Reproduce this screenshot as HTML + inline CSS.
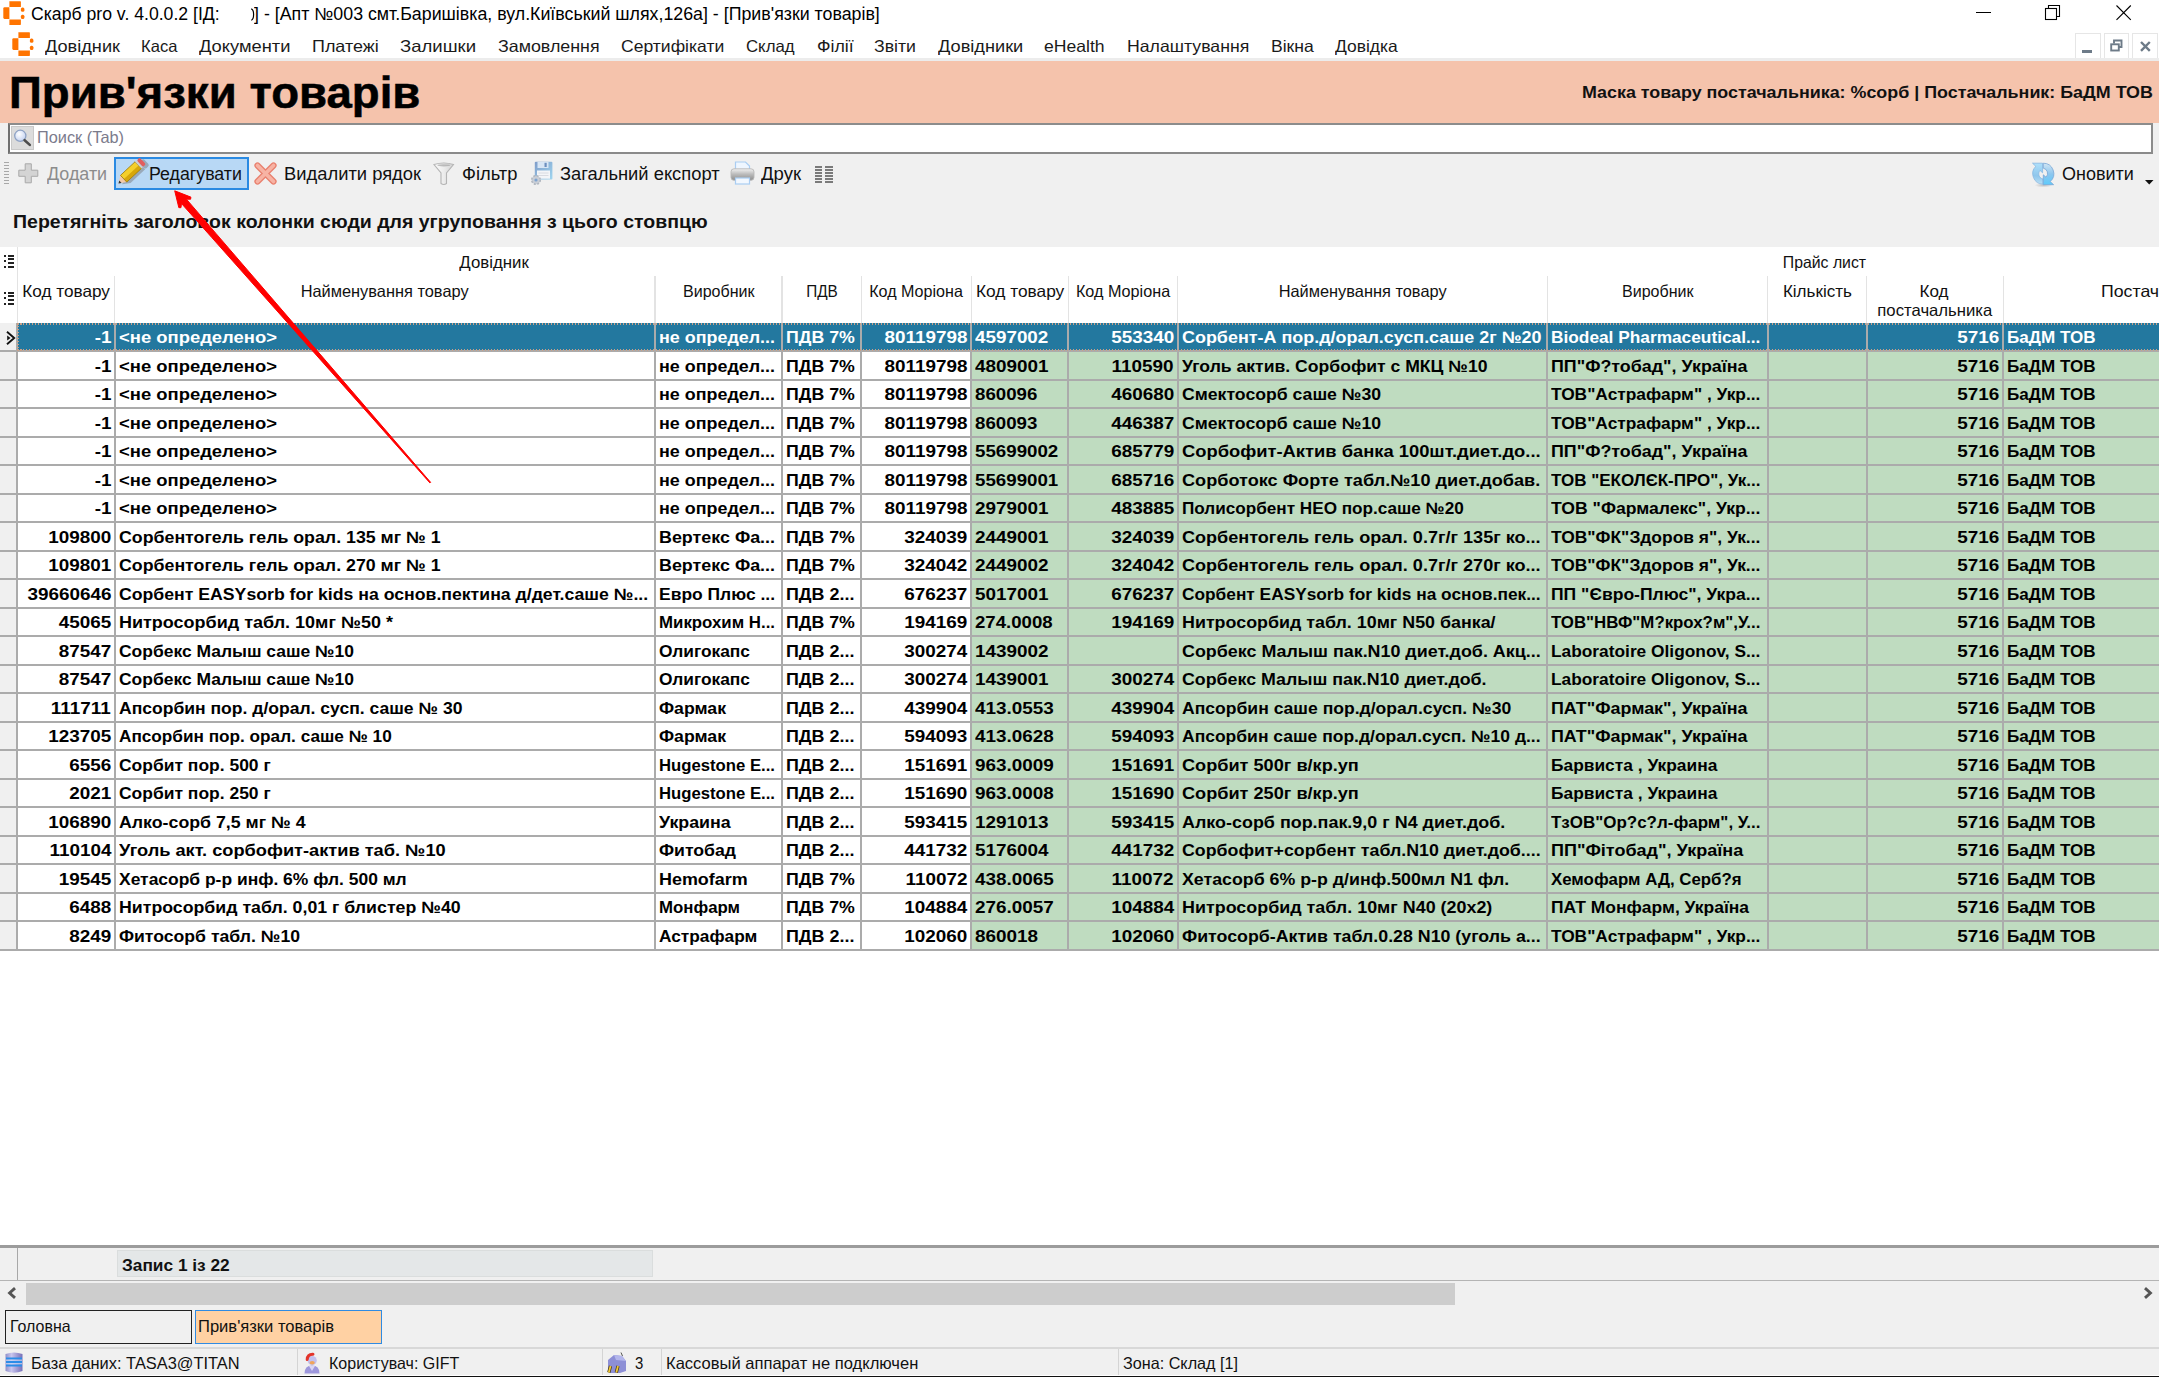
<!DOCTYPE html><html><head><meta charset='utf-8'><title>Прив'язки товарів</title><style>
html,body{margin:0;padding:0}
body{width:2159px;height:1377px;position:relative;overflow:hidden;background:#fff;font-family:'Liberation Sans',sans-serif}
.a{position:absolute}
.t{position:absolute;white-space:pre;line-height:1}
svg{position:absolute;overflow:visible}
</style></head><body>
<svg style="left:3px;top:1px" width="22" height="24" viewBox="0 0 22 24">
<path d="M6.4 0.3 H17.4 Q17.9 0.3 17.9 1 V5.9 H6.4 Z" fill="#FF7400"/>
<path d="M6.4 6.2 V17.9 H1.5 Q0.3 17.9 0.3 16.6 V7.5 Q0.3 6.2 1.5 6.2 Z" fill="#FF7400"/>
<path d="M6.4 18.4 H17.9 V23 Q17.9 23.9 17.4 23.9 H6.4 Z" fill="#FF7400"/>
<rect x="17.9" y="6.4" width="3.5" height="4.3" rx="1.5" fill="#FF7400"/>
<rect x="17.9" y="13.8" width="3.5" height="4.3" rx="1.5" fill="#FF7400"/>
</svg>
<div class="t" style="top:6.29px;font-size:17.5px;color:#000;left:31.00px;transform-origin:0 0;transform:scaleX(1.0081);">Скарб pro v. 4.0.0.2 [ІД:</div>
<svg style="left:250px;top:8px" width="5" height="14" viewBox="0 0 5 14"><path d="M1.2 0.8 Q3.6 1.5 3.6 6.5 Q3.6 11.5 1.2 12.3" fill="none" stroke="#000" stroke-width="1.2"/></svg>
<div class="t" style="top:6.29px;font-size:17.5px;color:#000;left:254.20px;transform-origin:0 0;transform:scaleX(1.0163);">] - [Апт №003 смт.Баришівка, вул.Київський шлях,126а] - [Прив'язки товарів]</div>
<div class="a" style="left:1976px;top:12px;width:15px;height:1.2px;background:#000;"></div>
<svg style="left:2045px;top:5px" width="16" height="16" viewBox="0 0 16 16"><rect x="0.5" y="3.5" width="11" height="11" fill="#fff" stroke="#000" stroke-width="1.1"/><path d="M3.5 3.5 V0.5 H14.5 V11.5 H11.5" fill="none" stroke="#000" stroke-width="1.1"/></svg>
<svg style="left:2116px;top:5px" width="16" height="16" viewBox="0 0 16 16"><path d="M0.5 0.5 L14.8 14.8 M14.8 0.5 L0.5 14.8" stroke="#000" stroke-width="1.1"/></svg>
<svg style="left:11.5px;top:32px" width="22" height="24" viewBox="0 0 22 24">
<path d="M6.4 0.3 H17.4 Q17.9 0.3 17.9 1 V5.9 H6.4 Z" fill="#FF7400"/>
<path d="M6.4 6.2 V17.9 H1.5 Q0.3 17.9 0.3 16.6 V7.5 Q0.3 6.2 1.5 6.2 Z" fill="#FF7400"/>
<path d="M6.4 18.4 H17.9 V23 Q17.9 23.9 17.4 23.9 H6.4 Z" fill="#FF7400"/>
<rect x="17.9" y="6.4" width="3.5" height="4.3" rx="1.5" fill="#FF7400"/>
<rect x="17.9" y="13.8" width="3.5" height="4.3" rx="1.5" fill="#FF7400"/>
</svg>
<div class="t" style="top:37.63px;font-size:16.5px;color:#1a1a1a;left:45.00px;transform-origin:0 0;transform:scaleX(1.1004);">Довідник</div>
<div class="t" style="top:37.63px;font-size:16.5px;color:#1a1a1a;left:141.30px;transform-origin:0 0;transform:scaleX(1.0050);">Каса</div>
<div class="t" style="top:37.63px;font-size:16.5px;color:#1a1a1a;left:199.30px;transform-origin:0 0;transform:scaleX(1.1089);">Документи</div>
<div class="t" style="top:37.63px;font-size:16.5px;color:#1a1a1a;left:312.30px;transform-origin:0 0;transform:scaleX(1.0868);">Платежі</div>
<div class="t" style="top:37.63px;font-size:16.5px;color:#1a1a1a;left:400.00px;transform-origin:0 0;transform:scaleX(1.1231);">Залишки</div>
<div class="t" style="top:37.63px;font-size:16.5px;color:#1a1a1a;left:497.70px;transform-origin:0 0;transform:scaleX(1.0807);">Замовлення</div>
<div class="t" style="top:37.63px;font-size:16.5px;color:#1a1a1a;left:620.70px;transform-origin:0 0;transform:scaleX(1.0639);">Сертифікати</div>
<div class="t" style="top:37.63px;font-size:16.5px;color:#1a1a1a;left:746.30px;transform-origin:0 0;transform:scaleX(1.0175);">Склад</div>
<div class="t" style="top:37.63px;font-size:16.5px;color:#1a1a1a;left:816.50px;transform-origin:0 0;transform:scaleX(1.0764);">Філії</div>
<div class="t" style="top:37.63px;font-size:16.5px;color:#1a1a1a;left:874.00px;transform-origin:0 0;transform:scaleX(1.0722);">Звіти</div>
<div class="t" style="top:37.63px;font-size:16.5px;color:#1a1a1a;left:937.50px;transform-origin:0 0;transform:scaleX(1.1024);">Довідники</div>
<div class="t" style="top:37.63px;font-size:16.5px;color:#1a1a1a;left:1044.40px;transform-origin:0 0;transform:scaleX(1.0655);">eHealth</div>
<div class="t" style="top:37.63px;font-size:16.5px;color:#1a1a1a;left:1126.70px;transform-origin:0 0;transform:scaleX(1.0724);">Налаштування</div>
<div class="t" style="top:37.63px;font-size:16.5px;color:#1a1a1a;left:1270.60px;transform-origin:0 0;transform:scaleX(1.0650);">Вікна</div>
<div class="t" style="top:37.63px;font-size:16.5px;color:#1a1a1a;left:1334.70px;transform-origin:0 0;transform:scaleX(1.0563);">Довідка</div>
<div class="a" style="left:2075px;top:33px;width:25.5px;height:25.5px;background:#fff;box-sizing:border-box;border:1px solid #e6e6e6;"></div>
<div class="a" style="left:2103.5px;top:33px;width:25.5px;height:25.5px;background:#fff;box-sizing:border-box;border:1px solid #e6e6e6;"></div>
<div class="a" style="left:2132px;top:33px;width:25.5px;height:25.5px;background:#fff;box-sizing:border-box;border:1px solid #e6e6e6;"></div>
<div class="a" style="left:2082px;top:50px;width:9.5px;height:3px;background:#6d7b88;"></div>
<svg style="left:2110px;top:39px" width="13" height="13" viewBox="0 0 13 13"><rect x="1.2" y="5.3" width="7.6" height="6.2" fill="none" stroke="#6d7b88" stroke-width="1.9"/><path d="M4 4.5 V1.5 H11.5 V8 H9" fill="none" stroke="#6d7b88" stroke-width="1.9"/></svg>
<svg style="left:2140px;top:41px" width="11" height="11" viewBox="0 0 11 11"><path d="M1 1 L9.8 9.8 M9.8 1 L1 9.8" stroke="#6d7b88" stroke-width="2.4"/></svg>
<div class="a" style="left:0px;top:57.5px;width:2159px;height:3.5px;background:#ececec;"></div>
<div class="a" style="left:0px;top:61px;width:2159px;height:61.5px;background:#F5C3AC;"></div>
<div class="t" style="top:72.18px;font-size:43.5px;color:#000;font-weight:bold;left:9.30px;transform-origin:0 0;transform:scaleX(1.0486);-webkit-text-stroke:0.5px #000;">Прив'язки товарів</div>
<div class="t" style="top:84.03px;font-size:16.5px;color:#111;font-weight:bold;left:1625.66px;transform-origin:100% 0;transform:scaleX(1.0836);">Маска товару постачальника: %сорб | Постачальник: БаДМ ТОВ</div>
<div class="a" style="left:0px;top:122.5px;width:2159px;height:126px;background:#F0F0F0;"></div>
<div class="a" style="left:7.5px;top:123px;width:2145px;height:30.5px;background:#fff;box-sizing:border-box;border:2px solid #707070;border-top-color:#8c8c8c;border-bottom-color:#8a8a8a;border-right-color:#8c8c8c;"></div>
<div class="a" style="left:10.7px;top:125.8px;width:23.6px;height:24.7px;background:#dcdcdc;box-sizing:border-box;border:1px solid #c9c9c9;"></div>
<svg style="left:12px;top:127px" width="22" height="22" viewBox="0 0 22 22"><defs><radialGradient id="lg" cx="40%" cy="35%" r="60%"><stop offset="0" stop-color="#fff"/><stop offset="1" stop-color="#c9d6f2"/></radialGradient></defs><circle cx="8.3" cy="8.8" r="5.6" fill="url(#lg)" stroke="#8ea2c4" stroke-width="1.3"/><path d="M12.6 13.2 L17.8 17.9" stroke="#4d4d4d" stroke-width="2.6" stroke-linecap="round"/></svg>
<div class="t" style="top:129.23px;font-size:16.5px;color:#7b7b8c;left:37.20px;transform-origin:0 0;transform:scaleX(0.9897);">Поиск (Tab)</div>
<div class="a" style="left:4.4px;top:161.5px;width:4.6px;height:1.5px;background:#a8a8a8;"></div>
<div class="a" style="left:4.4px;top:164.5px;width:4.6px;height:1.5px;background:#a8a8a8;"></div>
<div class="a" style="left:4.4px;top:167.5px;width:4.6px;height:1.5px;background:#a8a8a8;"></div>
<div class="a" style="left:4.4px;top:170.5px;width:4.6px;height:1.5px;background:#a8a8a8;"></div>
<div class="a" style="left:4.4px;top:173.5px;width:4.6px;height:1.5px;background:#a8a8a8;"></div>
<div class="a" style="left:4.4px;top:176.5px;width:4.6px;height:1.5px;background:#a8a8a8;"></div>
<div class="a" style="left:4.4px;top:179.5px;width:4.6px;height:1.5px;background:#a8a8a8;"></div>
<div class="a" style="left:4.4px;top:182.5px;width:4.6px;height:1.5px;background:#a8a8a8;"></div>
<svg style="left:18px;top:163px" width="21" height="21" viewBox="0 0 21 21"><path d="M7.2 0.8 H13.3 V7.2 H19.8 V13.3 H13.3 V19.8 H7.2 V13.3 H0.8 V7.2 H7.2 Z" fill="#d4d4d4" stroke="#a9a9a9" stroke-width="1"/></svg>
<div class="t" style="top:165.79px;font-size:17.5px;color:#8c8c8c;left:46.90px;transform-origin:0 0;transform:scaleX(1.0230);">Додати</div>
<div class="a" style="left:114px;top:157px;width:135px;height:33px;background:#B8D8F5;box-sizing:border-box;border:2px solid #2a8ae2;"></div>
<svg style="left:114px;top:157px" width="34" height="34" viewBox="0 0 34 34"><g transform="translate(4.5,26.5) rotate(-43)"><g transform="translate(2.2,3.2)" fill="#8f9aa5" opacity="0.75"><path d="M0 0 L7 -4.6 H27 V4.6 H7 Z"/><rect x="27" y="-4.6" width="6" height="9.2" rx="2"/></g><path d="M0 0 L7 -4.6 V4.6 Z" fill="#f3c9a8"/><path d="M0 0 L2.6 -1.7 V1.7 Z" fill="#333"/><rect x="7" y="-4.6" width="20" height="9.2" fill="#f4cf2a"/><rect x="7" y="0.5" width="20" height="4.1" fill="#d7a70a"/><rect x="7" y="-4.6" width="20" height="9.2" fill="none" stroke="#9c7b12" stroke-width="0.8"/><rect x="27" y="-4.6" width="2.2" height="9.2" fill="#cfcfcf"/><rect x="29.2" y="-4.6" width="4" height="9.2" rx="1.6" fill="#e35d5d"/></g></svg>
<div class="t" style="top:165.79px;font-size:17.5px;color:#111;left:149.20px;transform-origin:0 0;transform:scaleX(1.0144);">Редагувати</div>
<svg style="left:254px;top:162px" width="23" height="23" viewBox="0 0 23 23"><path d="M3.5 3.5 L19.5 19.5 M19.5 3.5 L3.5 19.5" stroke="#e9806e" stroke-width="6.2" stroke-linecap="round"/><path d="M3.5 3.5 L19.5 19.5 M19.5 3.5 L3.5 19.5" stroke="#f7b3a4" stroke-width="3.6" stroke-linecap="round"/></svg>
<div class="t" style="top:165.79px;font-size:17.5px;color:#111;left:284.30px;transform-origin:0 0;transform:scaleX(1.0493);">Видалити рядок</div>
<svg style="left:433px;top:161.5px" width="22" height="24" viewBox="0 0 22 24"><defs><linearGradient id="flg" x1="0" x2="1"><stop offset="0" stop-color="#fbfbfb"/><stop offset="0.5" stop-color="#ececec"/><stop offset="1" stop-color="#d2d2d2"/></linearGradient></defs><path d="M1 2.5 Q10.8 -0.5 20.5 2.5 L13.5 11 V21.5 Q10.8 23.5 8 21.5 V11 Z" fill="url(#flg)" stroke="#b4b4b4" stroke-width="1.1"/><ellipse cx="10.8" cy="3.3" rx="6.5" ry="1.1" fill="#9a9a9a" opacity="0.6"/></svg>
<div class="t" style="top:165.79px;font-size:17.5px;color:#111;left:462.40px;transform-origin:0 0;transform:scaleX(1.0471);">Фільтр</div>
<svg style="left:530px;top:161px" width="24" height="24" viewBox="0 0 24 24"><defs><linearGradient id="fg" x1="0" y1="0" x2="1" y2="1"><stop offset="0" stop-color="#7f9cc9"/><stop offset="1" stop-color="#9fd6f0"/></linearGradient></defs><rect x="4.8" y="0.8" width="17.6" height="17.6" rx="1" fill="url(#fg)"/><rect x="7.5" y="1" width="11" height="6" fill="#d8e6f5"/><rect x="14.5" y="1.8" width="2.2" height="4.2" fill="#6d8fbf"/><rect x="7" y="9.5" width="13" height="8.2" fill="#f3f5f8"/><path d="M8.5 12 H18.5 M8.5 14.5 H18.5" stroke="#d0d4da" stroke-width="0.8"/><circle cx="6" cy="19" r="4.3" fill="#c9ced6" stroke="#b0b6bf" stroke-width="1.5" stroke-dasharray="2 1.4"/><circle cx="6" cy="19" r="1.6" fill="#7ea3cf"/></svg>
<div class="t" style="top:165.79px;font-size:17.5px;color:#111;left:559.60px;transform-origin:0 0;transform:scaleX(1.0475);">Загальний експорт</div>
<svg style="left:730px;top:161px" width="25" height="24" viewBox="0 0 25 24"><defs><linearGradient id="pg" x1="0" y1="0" x2="0" y2="1"><stop offset="0" stop-color="#f2f2f2"/><stop offset="0.45" stop-color="#bdbdbd"/><stop offset="1" stop-color="#8d8d8d"/></linearGradient></defs><path d="M5.5 1 H15.5 L19.5 5 V10 H5.5 Z" fill="#eef6ff" stroke="#a9cdf2" stroke-width="1.2"/><rect x="1" y="7.8" width="23" height="11.5" rx="3" fill="url(#pg)" stroke="#b8b8b8" stroke-width="0.9"/><rect x="5.5" y="17" width="14" height="6" fill="#f2f8ff" stroke="#a9cdf2" stroke-width="1.2"/></svg>
<div class="t" style="top:165.79px;font-size:17.5px;color:#111;left:760.70px;transform-origin:0 0;transform:scaleX(1.0583);">Друк</div>
<div class="a" style="left:814.5px;top:165.8px;width:7.5px;height:2px;background:#7a7a7a;"></div>
<div class="a" style="left:814.5px;top:168.85000000000002px;width:7.5px;height:2px;background:#7a7a7a;"></div>
<div class="a" style="left:814.5px;top:171.9px;width:7.5px;height:2px;background:#7a7a7a;"></div>
<div class="a" style="left:814.5px;top:174.95000000000002px;width:7.5px;height:2px;background:#7a7a7a;"></div>
<div class="a" style="left:814.5px;top:178.0px;width:7.5px;height:2px;background:#7a7a7a;"></div>
<div class="a" style="left:814.5px;top:181.05px;width:7.5px;height:2px;background:#7a7a7a;"></div>
<div class="a" style="left:825.0px;top:165.8px;width:7.5px;height:2px;background:#7a7a7a;"></div>
<div class="a" style="left:825.0px;top:168.85000000000002px;width:7.5px;height:2px;background:#7a7a7a;"></div>
<div class="a" style="left:825.0px;top:171.9px;width:7.5px;height:2px;background:#7a7a7a;"></div>
<div class="a" style="left:825.0px;top:174.95000000000002px;width:7.5px;height:2px;background:#7a7a7a;"></div>
<div class="a" style="left:825.0px;top:178.0px;width:7.5px;height:2px;background:#7a7a7a;"></div>
<div class="a" style="left:825.0px;top:181.05px;width:7.5px;height:2px;background:#7a7a7a;"></div>
<svg style="left:2031px;top:162px" width="24" height="26" viewBox="0 0 24 26"><defs><linearGradient id="rf1" x1="0" y1="0" x2="0" y2="1"><stop offset="0" stop-color="#aee0fb"/><stop offset="0.6" stop-color="#8fc6ec"/><stop offset="1" stop-color="#b9dff4"/></linearGradient><linearGradient id="rf2" x1="0" y1="0" x2="0" y2="1"><stop offset="0" stop-color="#d2e6f4"/><stop offset="0.5" stop-color="#8dc6ee"/><stop offset="1" stop-color="#5ecbfb"/></linearGradient><radialGradient id="rsh" cx="0.5" cy="0.5" r="0.5"><stop offset="0" stop-color="#9a9a9a" stop-opacity="0.55"/><stop offset="1" stop-color="#9a9a9a" stop-opacity="0"/></radialGradient></defs><ellipse cx="12.5" cy="23.3" rx="9" ry="2.2" fill="url(#rsh)"/><path d="M1.5 1.2 H11.6 V10.8 L9 8.4 A5.3 5.3 0 0 0 12 17 V22.2 A10.5 10.5 0 0 1 4.8 4.3 Z" fill="url(#rf1)" stroke="#86b6e2" stroke-width="0.8"/><path d="M22.6 22.7 H12.3 V12.8 L15 15.2 A5.3 5.3 0 0 0 12.3 6.2 V1.2 A10.5 10.5 0 0 1 19.2 19.6 Z" fill="url(#rf2)" stroke="#77a6d6" stroke-width="0.8"/></svg>
<div class="t" style="top:165.79px;font-size:17.5px;color:#111;left:2061.50px;transform-origin:0 0;transform:scaleX(1.0275);">Оновити</div>
<svg style="left:2144.7px;top:179.5px" width="9" height="5" viewBox="0 0 9 5"><path d="M0 0 H8.5 L4.25 4.5 Z" fill="#111"/></svg>
<div class="t" style="top:212.51px;font-size:18.3px;color:#111;font-weight:bold;left:12.60px;transform-origin:0 0;transform:scaleX(1.0674);">Перетягніть заголовок колонки сюди для угруповання з цього стовпцю</div>
<div class="a" style="left:0px;top:247px;width:2159px;height:998px;background:#fff;"></div>
<div class="a" style="left:16.6px;top:247px;width:1.2px;height:75.5px;background:#e3e3e3;"></div>
<div class="a" style="left:114.2px;top:275.5px;width:1.3px;height:47.0px;background:#e3e3e3;"></div>
<div class="a" style="left:654.4px;top:275.5px;width:1.3px;height:47.0px;background:#e3e3e3;"></div>
<div class="a" style="left:781.4px;top:275.5px;width:1.3px;height:47.0px;background:#e3e3e3;"></div>
<div class="a" style="left:860.8px;top:275.5px;width:1.3px;height:47.0px;background:#e3e3e3;"></div>
<div class="a" style="left:970.6999999999999px;top:275.5px;width:1.3px;height:47.0px;background:#e3e3e3;"></div>
<div class="a" style="left:1067.7px;top:275.5px;width:1.3px;height:47.0px;background:#e3e3e3;"></div>
<div class="a" style="left:1177.1000000000001px;top:275.5px;width:1.3px;height:47.0px;background:#e3e3e3;"></div>
<div class="a" style="left:1546.7px;top:275.5px;width:1.3px;height:47.0px;background:#e3e3e3;"></div>
<div class="a" style="left:1767.1000000000001px;top:275.5px;width:1.3px;height:47.0px;background:#e3e3e3;"></div>
<div class="a" style="left:1866.1000000000001px;top:275.5px;width:1.3px;height:47.0px;background:#e3e3e3;"></div>
<div class="a" style="left:2002.7px;top:275.5px;width:1.3px;height:47.0px;background:#e3e3e3;"></div>
<div class="a" style="left:4px;top:254.5px;width:2px;height:2px;background:#222;"></div>
<div class="a" style="left:4px;top:260.0px;width:2px;height:2px;background:#222;"></div>
<div class="a" style="left:4px;top:265.5px;width:2px;height:2px;background:#222;"></div>
<div class="a" style="left:8px;top:254.5px;width:6px;height:2.2px;background:#222;"></div>
<div class="a" style="left:8px;top:258.2px;width:6px;height:2.2px;background:#222;"></div>
<div class="a" style="left:8px;top:261.9px;width:6px;height:2.2px;background:#222;"></div>
<div class="a" style="left:8px;top:265.6px;width:6px;height:2.2px;background:#222;"></div>
<div class="a" style="left:4px;top:291.5px;width:2px;height:2px;background:#222;"></div>
<div class="a" style="left:4px;top:297.0px;width:2px;height:2px;background:#222;"></div>
<div class="a" style="left:4px;top:302.5px;width:2px;height:2px;background:#222;"></div>
<div class="a" style="left:8px;top:291.5px;width:6px;height:2.2px;background:#222;"></div>
<div class="a" style="left:8px;top:295.2px;width:6px;height:2.2px;background:#222;"></div>
<div class="a" style="left:8px;top:298.9px;width:6px;height:2.2px;background:#222;"></div>
<div class="a" style="left:8px;top:302.6px;width:6px;height:2.2px;background:#222;"></div>
<div class="t" style="top:253.93px;font-size:16.5px;color:#111;left:459.92px;transform-origin:50% 0;transform:scaleX(1.0197);">Довідник</div>
<div class="t" style="top:253.93px;font-size:16.5px;color:#111;left:1780.54px;transform-origin:50% 0;transform:scaleX(0.9583);">Прайс лист</div>
<div class="t" style="top:282.53px;font-size:16.5px;color:#111;left:23.96px;transform-origin:50% 0;transform:scaleX(1.0417);">Код товару</div>
<div class="t" style="top:282.53px;font-size:16.5px;color:#111;left:300.27px;transform-origin:50% 0;transform:scaleX(0.9926);">Найменування товару</div>
<div class="t" style="top:282.53px;font-size:16.5px;color:#111;left:681.71px;transform-origin:50% 0;transform:scaleX(0.9731);">Виробник</div>
<div class="t" style="top:282.53px;font-size:16.5px;color:#111;left:804.68px;transform-origin:50% 0;transform:scaleX(0.9281);">ПДВ</div>
<div class="t" style="top:282.53px;font-size:16.5px;color:#111;left:868.32px;transform-origin:50% 0;transform:scaleX(0.9754);">Код Моріона</div>
<div class="t" style="top:282.53px;font-size:16.5px;color:#111;left:977.71px;transform-origin:50% 0;transform:scaleX(1.0488);">Код товару</div>
<div class="t" style="top:282.53px;font-size:16.5px;color:#111;left:1074.97px;transform-origin:50% 0;transform:scaleX(0.9817);">Код Моріона</div>
<div class="t" style="top:282.53px;font-size:16.5px;color:#111;left:1277.88px;transform-origin:50% 0;transform:scaleX(0.9926);">Найменування товару</div>
<div class="t" style="top:282.53px;font-size:16.5px;color:#111;left:1620.71px;transform-origin:50% 0;transform:scaleX(0.9731);">Виробник</div>
<div class="t" style="top:282.53px;font-size:16.5px;color:#111;left:1783.80px;transform-origin:50% 0;transform:scaleX(1.0330);">Кількість</div>
<div class="t" style="top:282.83px;font-size:16.5px;color:#111;left:1919.97px;transform-origin:50% 0;transform:scaleX(1.0334);">Код</div>
<div class="t" style="top:302.03px;font-size:16.5px;color:#111;left:1877.68px;transform-origin:50% 0;transform:scaleX(1.0120);">постачальника</div>
<div class="t" style="top:282.53px;font-size:16.5px;color:#111;left:2100.70px;transform-origin:0 0;transform:scaleX(1.0745);">Постачальник</div>
<div class="a" style="left:0px;top:322.9px;width:17.3px;height:28.5px;background:#f0f0f0;"></div>
<div class="a" style="left:17.3px;top:322.9px;width:2141.7px;height:28.5px;background:#23789F;"></div>
<div class="t" style="top:329.30px;font-size:16.3px;color:#fff;font-weight:bold;left:96.52px;transform-origin:100% 0;transform:scaleX(1.1600);">-1</div>
<div class="t" style="top:329.30px;font-size:16.3px;color:#fff;font-weight:bold;left:118.80px;transform-origin:0 0;transform:scaleX(1.1321);">&lt;не определено&gt;</div>
<div class="t" style="top:329.30px;font-size:16.3px;color:#fff;font-weight:bold;left:659.00px;transform-origin:0 0;transform:scaleX(1.0995);">не определ...</div>
<div class="t" style="top:329.30px;font-size:16.3px;color:#fff;font-weight:bold;left:786.00px;transform-origin:0 0;transform:scaleX(1.0900);">ПДВ 7%</div>
<div class="t" style="top:329.30px;font-size:16.3px;color:#fff;font-weight:bold;left:895.95px;transform-origin:100% 0;transform:scaleX(1.1600);">80119798</div>
<div class="t" style="top:329.30px;font-size:16.3px;color:#fff;font-weight:bold;left:975.30px;transform-origin:0 0;transform:scaleX(1.1563);">4597002</div>
<div class="t" style="top:329.30px;font-size:16.3px;color:#fff;font-weight:bold;left:1119.56px;transform-origin:100% 0;transform:scaleX(1.1600);">553340</div>
<div class="t" style="top:329.30px;font-size:16.3px;color:#fff;font-weight:bold;left:1181.70px;transform-origin:0 0;transform:scaleX(1.1017);">Сорбент-А пор.д/орал.сусп.саше 2г №20</div>
<div class="t" style="top:329.30px;font-size:16.3px;color:#fff;font-weight:bold;left:1551.30px;transform-origin:0 0;transform:scaleX(1.0615);">Biodeal Pharmaceutical...</div>
<div class="t" style="top:329.30px;font-size:16.3px;color:#fff;font-weight:bold;left:1963.27px;transform-origin:100% 0;transform:scaleX(1.1600);">5716</div>
<div class="t" style="top:329.30px;font-size:16.3px;color:#fff;font-weight:bold;left:2007.30px;transform-origin:0 0;transform:scaleX(1.0485);">БаДМ ТОВ</div>
<div class="a" style="left:0px;top:351.4px;width:17.3px;height:28.5px;background:#f0f0f0;"></div>
<div class="a" style="left:971px;top:351.4px;width:1188px;height:28.5px;background:#BFDCC0;"></div>
<div class="t" style="top:357.80px;font-size:16.3px;color:#000;font-weight:bold;left:96.52px;transform-origin:100% 0;transform:scaleX(1.1600);">-1</div>
<div class="t" style="top:357.80px;font-size:16.3px;color:#000;font-weight:bold;left:118.80px;transform-origin:0 0;transform:scaleX(1.1321);">&lt;не определено&gt;</div>
<div class="t" style="top:357.80px;font-size:16.3px;color:#000;font-weight:bold;left:659.00px;transform-origin:0 0;transform:scaleX(1.0995);">не определ...</div>
<div class="t" style="top:357.80px;font-size:16.3px;color:#000;font-weight:bold;left:786.00px;transform-origin:0 0;transform:scaleX(1.0900);">ПДВ 7%</div>
<div class="t" style="top:357.80px;font-size:16.3px;color:#000;font-weight:bold;left:895.95px;transform-origin:100% 0;transform:scaleX(1.1600);">80119798</div>
<div class="t" style="top:357.80px;font-size:16.3px;color:#000;font-weight:bold;left:975.30px;transform-origin:0 0;transform:scaleX(1.1600);">4809001</div>
<div class="t" style="top:357.80px;font-size:16.3px;color:#000;font-weight:bold;left:1120.46px;transform-origin:100% 0;transform:scaleX(1.1600);">110590</div>
<div class="t" style="top:357.80px;font-size:16.3px;color:#000;font-weight:bold;left:1181.70px;transform-origin:0 0;transform:scaleX(1.0799);">Уголь актив. Сорбофит с МКЦ №10</div>
<div class="t" style="top:357.80px;font-size:16.3px;color:#000;font-weight:bold;left:1551.30px;transform-origin:0 0;transform:scaleX(1.0977);">ПП"Ф?тобад", Україна</div>
<div class="t" style="top:357.80px;font-size:16.3px;color:#000;font-weight:bold;left:1963.27px;transform-origin:100% 0;transform:scaleX(1.1600);">5716</div>
<div class="t" style="top:357.80px;font-size:16.3px;color:#000;font-weight:bold;left:2007.30px;transform-origin:0 0;transform:scaleX(1.0485);">БаДМ ТОВ</div>
<div class="a" style="left:0px;top:379.9px;width:17.3px;height:28.5px;background:#f0f0f0;"></div>
<div class="a" style="left:971px;top:379.9px;width:1188px;height:28.5px;background:#BFDCC0;"></div>
<div class="t" style="top:386.30px;font-size:16.3px;color:#000;font-weight:bold;left:96.52px;transform-origin:100% 0;transform:scaleX(1.1600);">-1</div>
<div class="t" style="top:386.30px;font-size:16.3px;color:#000;font-weight:bold;left:118.80px;transform-origin:0 0;transform:scaleX(1.1321);">&lt;не определено&gt;</div>
<div class="t" style="top:386.30px;font-size:16.3px;color:#000;font-weight:bold;left:659.00px;transform-origin:0 0;transform:scaleX(1.0995);">не определ...</div>
<div class="t" style="top:386.30px;font-size:16.3px;color:#000;font-weight:bold;left:786.00px;transform-origin:0 0;transform:scaleX(1.0900);">ПДВ 7%</div>
<div class="t" style="top:386.30px;font-size:16.3px;color:#000;font-weight:bold;left:895.95px;transform-origin:100% 0;transform:scaleX(1.1600);">80119798</div>
<div class="t" style="top:386.30px;font-size:16.3px;color:#000;font-weight:bold;left:975.30px;transform-origin:0 0;transform:scaleX(1.1464);">860096</div>
<div class="t" style="top:386.30px;font-size:16.3px;color:#000;font-weight:bold;left:1119.56px;transform-origin:100% 0;transform:scaleX(1.1600);">460680</div>
<div class="t" style="top:386.30px;font-size:16.3px;color:#000;font-weight:bold;left:1181.70px;transform-origin:0 0;transform:scaleX(1.0835);">Смектосорб саше №30</div>
<div class="t" style="top:386.30px;font-size:16.3px;color:#000;font-weight:bold;left:1551.30px;transform-origin:0 0;transform:scaleX(1.0640);">ТОВ"Астрафарм" , Укр...</div>
<div class="t" style="top:386.30px;font-size:16.3px;color:#000;font-weight:bold;left:1963.27px;transform-origin:100% 0;transform:scaleX(1.1600);">5716</div>
<div class="t" style="top:386.30px;font-size:16.3px;color:#000;font-weight:bold;left:2007.30px;transform-origin:0 0;transform:scaleX(1.0485);">БаДМ ТОВ</div>
<div class="a" style="left:0px;top:408.4px;width:17.3px;height:28.5px;background:#f0f0f0;"></div>
<div class="a" style="left:971px;top:408.4px;width:1188px;height:28.5px;background:#BFDCC0;"></div>
<div class="t" style="top:414.80px;font-size:16.3px;color:#000;font-weight:bold;left:96.52px;transform-origin:100% 0;transform:scaleX(1.1600);">-1</div>
<div class="t" style="top:414.80px;font-size:16.3px;color:#000;font-weight:bold;left:118.80px;transform-origin:0 0;transform:scaleX(1.1321);">&lt;не определено&gt;</div>
<div class="t" style="top:414.80px;font-size:16.3px;color:#000;font-weight:bold;left:659.00px;transform-origin:0 0;transform:scaleX(1.0995);">не определ...</div>
<div class="t" style="top:414.80px;font-size:16.3px;color:#000;font-weight:bold;left:786.00px;transform-origin:0 0;transform:scaleX(1.0900);">ПДВ 7%</div>
<div class="t" style="top:414.80px;font-size:16.3px;color:#000;font-weight:bold;left:895.95px;transform-origin:100% 0;transform:scaleX(1.1600);">80119798</div>
<div class="t" style="top:414.80px;font-size:16.3px;color:#000;font-weight:bold;left:975.30px;transform-origin:0 0;transform:scaleX(1.1464);">860093</div>
<div class="t" style="top:414.80px;font-size:16.3px;color:#000;font-weight:bold;left:1119.56px;transform-origin:100% 0;transform:scaleX(1.1600);">446387</div>
<div class="t" style="top:414.80px;font-size:16.3px;color:#000;font-weight:bold;left:1181.70px;transform-origin:0 0;transform:scaleX(1.0835);">Смектосорб саше №10</div>
<div class="t" style="top:414.80px;font-size:16.3px;color:#000;font-weight:bold;left:1551.30px;transform-origin:0 0;transform:scaleX(1.0640);">ТОВ"Астрафарм" , Укр...</div>
<div class="t" style="top:414.80px;font-size:16.3px;color:#000;font-weight:bold;left:1963.27px;transform-origin:100% 0;transform:scaleX(1.1600);">5716</div>
<div class="t" style="top:414.80px;font-size:16.3px;color:#000;font-weight:bold;left:2007.30px;transform-origin:0 0;transform:scaleX(1.0485);">БаДМ ТОВ</div>
<div class="a" style="left:0px;top:436.9px;width:17.3px;height:28.5px;background:#f0f0f0;"></div>
<div class="a" style="left:971px;top:436.9px;width:1188px;height:28.5px;background:#BFDCC0;"></div>
<div class="t" style="top:443.30px;font-size:16.3px;color:#000;font-weight:bold;left:96.52px;transform-origin:100% 0;transform:scaleX(1.1600);">-1</div>
<div class="t" style="top:443.30px;font-size:16.3px;color:#000;font-weight:bold;left:118.80px;transform-origin:0 0;transform:scaleX(1.1321);">&lt;не определено&gt;</div>
<div class="t" style="top:443.30px;font-size:16.3px;color:#000;font-weight:bold;left:659.00px;transform-origin:0 0;transform:scaleX(1.0995);">не определ...</div>
<div class="t" style="top:443.30px;font-size:16.3px;color:#000;font-weight:bold;left:786.00px;transform-origin:0 0;transform:scaleX(1.0900);">ПДВ 7%</div>
<div class="t" style="top:443.30px;font-size:16.3px;color:#000;font-weight:bold;left:895.95px;transform-origin:100% 0;transform:scaleX(1.1600);">80119798</div>
<div class="t" style="top:443.30px;font-size:16.3px;color:#000;font-weight:bold;left:975.30px;transform-origin:0 0;transform:scaleX(1.1497);">55699002</div>
<div class="t" style="top:443.30px;font-size:16.3px;color:#000;font-weight:bold;left:1119.56px;transform-origin:100% 0;transform:scaleX(1.1600);">685779</div>
<div class="t" style="top:443.30px;font-size:16.3px;color:#000;font-weight:bold;left:1181.70px;transform-origin:0 0;transform:scaleX(1.1266);">Сорбофит-Актив банка 100шт.диет.до...</div>
<div class="t" style="top:443.30px;font-size:16.3px;color:#000;font-weight:bold;left:1551.30px;transform-origin:0 0;transform:scaleX(1.0977);">ПП"Ф?тобад", Україна</div>
<div class="t" style="top:443.30px;font-size:16.3px;color:#000;font-weight:bold;left:1963.27px;transform-origin:100% 0;transform:scaleX(1.1600);">5716</div>
<div class="t" style="top:443.30px;font-size:16.3px;color:#000;font-weight:bold;left:2007.30px;transform-origin:0 0;transform:scaleX(1.0485);">БаДМ ТОВ</div>
<div class="a" style="left:0px;top:465.4px;width:17.3px;height:28.5px;background:#f0f0f0;"></div>
<div class="a" style="left:971px;top:465.4px;width:1188px;height:28.5px;background:#BFDCC0;"></div>
<div class="t" style="top:471.80px;font-size:16.3px;color:#000;font-weight:bold;left:96.52px;transform-origin:100% 0;transform:scaleX(1.1600);">-1</div>
<div class="t" style="top:471.80px;font-size:16.3px;color:#000;font-weight:bold;left:118.80px;transform-origin:0 0;transform:scaleX(1.1321);">&lt;не определено&gt;</div>
<div class="t" style="top:471.80px;font-size:16.3px;color:#000;font-weight:bold;left:659.00px;transform-origin:0 0;transform:scaleX(1.0995);">не определ...</div>
<div class="t" style="top:471.80px;font-size:16.3px;color:#000;font-weight:bold;left:786.00px;transform-origin:0 0;transform:scaleX(1.0900);">ПДВ 7%</div>
<div class="t" style="top:471.80px;font-size:16.3px;color:#000;font-weight:bold;left:895.95px;transform-origin:100% 0;transform:scaleX(1.1600);">80119798</div>
<div class="t" style="top:471.80px;font-size:16.3px;color:#000;font-weight:bold;left:975.30px;transform-origin:0 0;transform:scaleX(1.1497);">55699001</div>
<div class="t" style="top:471.80px;font-size:16.3px;color:#000;font-weight:bold;left:1119.56px;transform-origin:100% 0;transform:scaleX(1.1600);">685716</div>
<div class="t" style="top:471.80px;font-size:16.3px;color:#000;font-weight:bold;left:1181.70px;transform-origin:0 0;transform:scaleX(1.1124);">Сорботокс Форте табл.№10 диет.добав.</div>
<div class="t" style="top:471.80px;font-size:16.3px;color:#000;font-weight:bold;left:1551.30px;transform-origin:0 0;transform:scaleX(1.0437);">ТОВ "ЕКОЛЄК-ПРО", Ук...</div>
<div class="t" style="top:471.80px;font-size:16.3px;color:#000;font-weight:bold;left:1963.27px;transform-origin:100% 0;transform:scaleX(1.1600);">5716</div>
<div class="t" style="top:471.80px;font-size:16.3px;color:#000;font-weight:bold;left:2007.30px;transform-origin:0 0;transform:scaleX(1.0485);">БаДМ ТОВ</div>
<div class="a" style="left:0px;top:493.9px;width:17.3px;height:28.5px;background:#f0f0f0;"></div>
<div class="a" style="left:971px;top:493.9px;width:1188px;height:28.5px;background:#BFDCC0;"></div>
<div class="t" style="top:500.30px;font-size:16.3px;color:#000;font-weight:bold;left:96.52px;transform-origin:100% 0;transform:scaleX(1.1600);">-1</div>
<div class="t" style="top:500.30px;font-size:16.3px;color:#000;font-weight:bold;left:118.80px;transform-origin:0 0;transform:scaleX(1.1321);">&lt;не определено&gt;</div>
<div class="t" style="top:500.30px;font-size:16.3px;color:#000;font-weight:bold;left:659.00px;transform-origin:0 0;transform:scaleX(1.0995);">не определ...</div>
<div class="t" style="top:500.30px;font-size:16.3px;color:#000;font-weight:bold;left:786.00px;transform-origin:0 0;transform:scaleX(1.0900);">ПДВ 7%</div>
<div class="t" style="top:500.30px;font-size:16.3px;color:#000;font-weight:bold;left:895.95px;transform-origin:100% 0;transform:scaleX(1.1600);">80119798</div>
<div class="t" style="top:500.30px;font-size:16.3px;color:#000;font-weight:bold;left:975.30px;transform-origin:0 0;transform:scaleX(1.1600);">2979001</div>
<div class="t" style="top:500.30px;font-size:16.3px;color:#000;font-weight:bold;left:1119.56px;transform-origin:100% 0;transform:scaleX(1.1600);">483885</div>
<div class="t" style="top:500.30px;font-size:16.3px;color:#000;font-weight:bold;left:1181.70px;transform-origin:0 0;transform:scaleX(1.0524);">Полисорбент НЕО пор.саше №20</div>
<div class="t" style="top:500.30px;font-size:16.3px;color:#000;font-weight:bold;left:1551.30px;transform-origin:0 0;transform:scaleX(1.0800);">ТОВ "Фармалекс", Укр...</div>
<div class="t" style="top:500.30px;font-size:16.3px;color:#000;font-weight:bold;left:1963.27px;transform-origin:100% 0;transform:scaleX(1.1600);">5716</div>
<div class="t" style="top:500.30px;font-size:16.3px;color:#000;font-weight:bold;left:2007.30px;transform-origin:0 0;transform:scaleX(1.0485);">БаДМ ТОВ</div>
<div class="a" style="left:0px;top:522.4px;width:17.3px;height:28.5px;background:#f0f0f0;"></div>
<div class="a" style="left:971px;top:522.4px;width:1188px;height:28.5px;background:#BFDCC0;"></div>
<div class="t" style="top:528.80px;font-size:16.3px;color:#000;font-weight:bold;left:56.66px;transform-origin:100% 0;transform:scaleX(1.1600);">109800</div>
<div class="t" style="top:528.80px;font-size:16.3px;color:#000;font-weight:bold;left:118.80px;transform-origin:0 0;transform:scaleX(1.0911);">Сорбентогель гель орал. 135 мг № 1</div>
<div class="t" style="top:528.80px;font-size:16.3px;color:#000;font-weight:bold;left:659.00px;transform-origin:0 0;transform:scaleX(1.0984);">Вертекс Фа...</div>
<div class="t" style="top:528.80px;font-size:16.3px;color:#000;font-weight:bold;left:786.00px;transform-origin:0 0;transform:scaleX(1.0900);">ПДВ 7%</div>
<div class="t" style="top:528.80px;font-size:16.3px;color:#000;font-weight:bold;left:913.16px;transform-origin:100% 0;transform:scaleX(1.1600);">324039</div>
<div class="t" style="top:528.80px;font-size:16.3px;color:#000;font-weight:bold;left:975.30px;transform-origin:0 0;transform:scaleX(1.1600);">2449001</div>
<div class="t" style="top:528.80px;font-size:16.3px;color:#000;font-weight:bold;left:1119.56px;transform-origin:100% 0;transform:scaleX(1.1600);">324039</div>
<div class="t" style="top:528.80px;font-size:16.3px;color:#000;font-weight:bold;left:1181.70px;transform-origin:0 0;transform:scaleX(1.1095);">Сорбентогель гель орал. 0.7г/г 135г ко...</div>
<div class="t" style="top:528.80px;font-size:16.3px;color:#000;font-weight:bold;left:1551.30px;transform-origin:0 0;transform:scaleX(1.0703);">ТОВ"ФК"Здоров я", Ук...</div>
<div class="t" style="top:528.80px;font-size:16.3px;color:#000;font-weight:bold;left:1963.27px;transform-origin:100% 0;transform:scaleX(1.1600);">5716</div>
<div class="t" style="top:528.80px;font-size:16.3px;color:#000;font-weight:bold;left:2007.30px;transform-origin:0 0;transform:scaleX(1.0485);">БаДМ ТОВ</div>
<div class="a" style="left:0px;top:550.9px;width:17.3px;height:28.5px;background:#f0f0f0;"></div>
<div class="a" style="left:971px;top:550.9px;width:1188px;height:28.5px;background:#BFDCC0;"></div>
<div class="t" style="top:557.30px;font-size:16.3px;color:#000;font-weight:bold;left:56.66px;transform-origin:100% 0;transform:scaleX(1.1600);">109801</div>
<div class="t" style="top:557.30px;font-size:16.3px;color:#000;font-weight:bold;left:118.80px;transform-origin:0 0;transform:scaleX(1.0911);">Сорбентогель гель орал. 270 мг № 1</div>
<div class="t" style="top:557.30px;font-size:16.3px;color:#000;font-weight:bold;left:659.00px;transform-origin:0 0;transform:scaleX(1.0984);">Вертекс Фа...</div>
<div class="t" style="top:557.30px;font-size:16.3px;color:#000;font-weight:bold;left:786.00px;transform-origin:0 0;transform:scaleX(1.0900);">ПДВ 7%</div>
<div class="t" style="top:557.30px;font-size:16.3px;color:#000;font-weight:bold;left:913.16px;transform-origin:100% 0;transform:scaleX(1.1600);">324042</div>
<div class="t" style="top:557.30px;font-size:16.3px;color:#000;font-weight:bold;left:975.30px;transform-origin:0 0;transform:scaleX(1.1600);">2449002</div>
<div class="t" style="top:557.30px;font-size:16.3px;color:#000;font-weight:bold;left:1119.56px;transform-origin:100% 0;transform:scaleX(1.1600);">324042</div>
<div class="t" style="top:557.30px;font-size:16.3px;color:#000;font-weight:bold;left:1181.70px;transform-origin:0 0;transform:scaleX(1.1095);">Сорбентогель гель орал. 0.7г/г 270г ко...</div>
<div class="t" style="top:557.30px;font-size:16.3px;color:#000;font-weight:bold;left:1551.30px;transform-origin:0 0;transform:scaleX(1.0703);">ТОВ"ФК"Здоров я", Ук...</div>
<div class="t" style="top:557.30px;font-size:16.3px;color:#000;font-weight:bold;left:1963.27px;transform-origin:100% 0;transform:scaleX(1.1600);">5716</div>
<div class="t" style="top:557.30px;font-size:16.3px;color:#000;font-weight:bold;left:2007.30px;transform-origin:0 0;transform:scaleX(1.0485);">БаДМ ТОВ</div>
<div class="a" style="left:0px;top:579.4px;width:17.3px;height:28.5px;background:#f0f0f0;"></div>
<div class="a" style="left:971px;top:579.4px;width:1188px;height:28.5px;background:#BFDCC0;"></div>
<div class="t" style="top:585.80px;font-size:16.3px;color:#000;font-weight:bold;left:38.55px;transform-origin:100% 0;transform:scaleX(1.1600);">39660646</div>
<div class="t" style="top:585.80px;font-size:16.3px;color:#000;font-weight:bold;left:118.80px;transform-origin:0 0;transform:scaleX(1.0849);">Сорбент EASYsorb for kids на основ.пектина д/дет.саше №...</div>
<div class="t" style="top:585.80px;font-size:16.3px;color:#000;font-weight:bold;left:659.00px;transform-origin:0 0;transform:scaleX(1.0724);">Евро Плюс ...</div>
<div class="t" style="top:585.80px;font-size:16.3px;color:#000;font-weight:bold;left:786.00px;transform-origin:0 0;transform:scaleX(1.0993);">ПДВ 2...</div>
<div class="t" style="top:585.80px;font-size:16.3px;color:#000;font-weight:bold;left:913.16px;transform-origin:100% 0;transform:scaleX(1.1600);">676237</div>
<div class="t" style="top:585.80px;font-size:16.3px;color:#000;font-weight:bold;left:975.30px;transform-origin:0 0;transform:scaleX(1.1600);">5017001</div>
<div class="t" style="top:585.80px;font-size:16.3px;color:#000;font-weight:bold;left:1119.56px;transform-origin:100% 0;transform:scaleX(1.1600);">676237</div>
<div class="t" style="top:585.80px;font-size:16.3px;color:#000;font-weight:bold;left:1181.70px;transform-origin:0 0;transform:scaleX(1.0619);">Сорбент EASYsorb for kids на основ.пек...</div>
<div class="t" style="top:585.80px;font-size:16.3px;color:#000;font-weight:bold;left:1551.30px;transform-origin:0 0;transform:scaleX(1.0775);">ПП "Євро-Плюс", Укра...</div>
<div class="t" style="top:585.80px;font-size:16.3px;color:#000;font-weight:bold;left:1963.27px;transform-origin:100% 0;transform:scaleX(1.1600);">5716</div>
<div class="t" style="top:585.80px;font-size:16.3px;color:#000;font-weight:bold;left:2007.30px;transform-origin:0 0;transform:scaleX(1.0485);">БаДМ ТОВ</div>
<div class="a" style="left:0px;top:607.9px;width:17.3px;height:28.5px;background:#f0f0f0;"></div>
<div class="a" style="left:971px;top:607.9px;width:1188px;height:28.5px;background:#BFDCC0;"></div>
<div class="t" style="top:614.30px;font-size:16.3px;color:#000;font-weight:bold;left:65.72px;transform-origin:100% 0;transform:scaleX(1.1600);">45065</div>
<div class="t" style="top:614.30px;font-size:16.3px;color:#000;font-weight:bold;left:118.80px;transform-origin:0 0;transform:scaleX(1.1051);">Нитросорбид табл. 10мг №50 *</div>
<div class="t" style="top:614.30px;font-size:16.3px;color:#000;font-weight:bold;left:659.00px;transform-origin:0 0;transform:scaleX(1.0341);">Микрохим Н...</div>
<div class="t" style="top:614.30px;font-size:16.3px;color:#000;font-weight:bold;left:786.00px;transform-origin:0 0;transform:scaleX(1.0900);">ПДВ 7%</div>
<div class="t" style="top:614.30px;font-size:16.3px;color:#000;font-weight:bold;left:913.16px;transform-origin:100% 0;transform:scaleX(1.1600);">194169</div>
<div class="t" style="top:614.30px;font-size:16.3px;color:#000;font-weight:bold;left:975.30px;transform-origin:0 0;transform:scaleX(1.1440);">274.0008</div>
<div class="t" style="top:614.30px;font-size:16.3px;color:#000;font-weight:bold;left:1119.56px;transform-origin:100% 0;transform:scaleX(1.1600);">194169</div>
<div class="t" style="top:614.30px;font-size:16.3px;color:#000;font-weight:bold;left:1181.70px;transform-origin:0 0;transform:scaleX(1.0969);">Нитросорбид табл. 10мг N50 банка/</div>
<div class="t" style="top:614.30px;font-size:16.3px;color:#000;font-weight:bold;left:1551.30px;transform-origin:0 0;transform:scaleX(1.0341);">ТОВ"НВФ"М?крох?м",У...</div>
<div class="t" style="top:614.30px;font-size:16.3px;color:#000;font-weight:bold;left:1963.27px;transform-origin:100% 0;transform:scaleX(1.1600);">5716</div>
<div class="t" style="top:614.30px;font-size:16.3px;color:#000;font-weight:bold;left:2007.30px;transform-origin:0 0;transform:scaleX(1.0485);">БаДМ ТОВ</div>
<div class="a" style="left:0px;top:636.4px;width:17.3px;height:28.5px;background:#f0f0f0;"></div>
<div class="a" style="left:971px;top:636.4px;width:1188px;height:28.5px;background:#BFDCC0;"></div>
<div class="t" style="top:642.80px;font-size:16.3px;color:#000;font-weight:bold;left:65.72px;transform-origin:100% 0;transform:scaleX(1.1600);">87547</div>
<div class="t" style="top:642.80px;font-size:16.3px;color:#000;font-weight:bold;left:118.80px;transform-origin:0 0;transform:scaleX(1.0723);">Сорбекс Малыш саше №10</div>
<div class="t" style="top:642.80px;font-size:16.3px;color:#000;font-weight:bold;left:659.00px;transform-origin:0 0;transform:scaleX(1.0655);">Олигокапс</div>
<div class="t" style="top:642.80px;font-size:16.3px;color:#000;font-weight:bold;left:786.00px;transform-origin:0 0;transform:scaleX(1.0993);">ПДВ 2...</div>
<div class="t" style="top:642.80px;font-size:16.3px;color:#000;font-weight:bold;left:913.16px;transform-origin:100% 0;transform:scaleX(1.1600);">300274</div>
<div class="t" style="top:642.80px;font-size:16.3px;color:#000;font-weight:bold;left:975.30px;transform-origin:0 0;transform:scaleX(1.1600);">1439002</div>
<div class="t" style="top:642.80px;font-size:16.3px;color:#000;font-weight:bold;left:1181.70px;transform-origin:0 0;transform:scaleX(1.0983);">Сорбекс Малыш пак.N10 диет.доб. Акц...</div>
<div class="t" style="top:642.80px;font-size:16.3px;color:#000;font-weight:bold;left:1551.30px;transform-origin:0 0;transform:scaleX(1.0635);">Laboratoire Oligonov, S...</div>
<div class="t" style="top:642.80px;font-size:16.3px;color:#000;font-weight:bold;left:1963.27px;transform-origin:100% 0;transform:scaleX(1.1600);">5716</div>
<div class="t" style="top:642.80px;font-size:16.3px;color:#000;font-weight:bold;left:2007.30px;transform-origin:0 0;transform:scaleX(1.0485);">БаДМ ТОВ</div>
<div class="a" style="left:0px;top:664.9px;width:17.3px;height:28.5px;background:#f0f0f0;"></div>
<div class="a" style="left:971px;top:664.9px;width:1188px;height:28.5px;background:#BFDCC0;"></div>
<div class="t" style="top:671.30px;font-size:16.3px;color:#000;font-weight:bold;left:65.72px;transform-origin:100% 0;transform:scaleX(1.1600);">87547</div>
<div class="t" style="top:671.30px;font-size:16.3px;color:#000;font-weight:bold;left:118.80px;transform-origin:0 0;transform:scaleX(1.0723);">Сорбекс Малыш саше №10</div>
<div class="t" style="top:671.30px;font-size:16.3px;color:#000;font-weight:bold;left:659.00px;transform-origin:0 0;transform:scaleX(1.0655);">Олигокапс</div>
<div class="t" style="top:671.30px;font-size:16.3px;color:#000;font-weight:bold;left:786.00px;transform-origin:0 0;transform:scaleX(1.0993);">ПДВ 2...</div>
<div class="t" style="top:671.30px;font-size:16.3px;color:#000;font-weight:bold;left:913.16px;transform-origin:100% 0;transform:scaleX(1.1600);">300274</div>
<div class="t" style="top:671.30px;font-size:16.3px;color:#000;font-weight:bold;left:975.30px;transform-origin:0 0;transform:scaleX(1.1600);">1439001</div>
<div class="t" style="top:671.30px;font-size:16.3px;color:#000;font-weight:bold;left:1119.56px;transform-origin:100% 0;transform:scaleX(1.1600);">300274</div>
<div class="t" style="top:671.30px;font-size:16.3px;color:#000;font-weight:bold;left:1181.70px;transform-origin:0 0;transform:scaleX(1.0934);">Сорбекс Малыш пак.N10 диет.доб.</div>
<div class="t" style="top:671.30px;font-size:16.3px;color:#000;font-weight:bold;left:1551.30px;transform-origin:0 0;transform:scaleX(1.0635);">Laboratoire Oligonov, S...</div>
<div class="t" style="top:671.30px;font-size:16.3px;color:#000;font-weight:bold;left:1963.27px;transform-origin:100% 0;transform:scaleX(1.1600);">5716</div>
<div class="t" style="top:671.30px;font-size:16.3px;color:#000;font-weight:bold;left:2007.30px;transform-origin:0 0;transform:scaleX(1.0485);">БаДМ ТОВ</div>
<div class="a" style="left:0px;top:693.4px;width:17.3px;height:28.5px;background:#f0f0f0;"></div>
<div class="a" style="left:971px;top:693.4px;width:1188px;height:28.5px;background:#BFDCC0;"></div>
<div class="t" style="top:699.80px;font-size:16.3px;color:#000;font-weight:bold;left:59.36px;transform-origin:100% 0;transform:scaleX(1.1600);">111711</div>
<div class="t" style="top:699.80px;font-size:16.3px;color:#000;font-weight:bold;left:118.80px;transform-origin:0 0;transform:scaleX(1.0771);">Апсорбин пор. д/орал. сусп. саше № 30</div>
<div class="t" style="top:699.80px;font-size:16.3px;color:#000;font-weight:bold;left:659.00px;transform-origin:0 0;transform:scaleX(1.0856);">Фармак</div>
<div class="t" style="top:699.80px;font-size:16.3px;color:#000;font-weight:bold;left:786.00px;transform-origin:0 0;transform:scaleX(1.0993);">ПДВ 2...</div>
<div class="t" style="top:699.80px;font-size:16.3px;color:#000;font-weight:bold;left:913.16px;transform-origin:100% 0;transform:scaleX(1.1600);">439904</div>
<div class="t" style="top:699.80px;font-size:16.3px;color:#000;font-weight:bold;left:975.30px;transform-origin:0 0;transform:scaleX(1.1600);">413.0553</div>
<div class="t" style="top:699.80px;font-size:16.3px;color:#000;font-weight:bold;left:1119.56px;transform-origin:100% 0;transform:scaleX(1.1600);">439904</div>
<div class="t" style="top:699.80px;font-size:16.3px;color:#000;font-weight:bold;left:1181.70px;transform-origin:0 0;transform:scaleX(1.0785);">Апсорбин саше пор.д/орал.сусп. №30</div>
<div class="t" style="top:699.80px;font-size:16.3px;color:#000;font-weight:bold;left:1551.30px;transform-origin:0 0;transform:scaleX(1.0982);">ПАТ"Фармак", Україна</div>
<div class="t" style="top:699.80px;font-size:16.3px;color:#000;font-weight:bold;left:1963.27px;transform-origin:100% 0;transform:scaleX(1.1600);">5716</div>
<div class="t" style="top:699.80px;font-size:16.3px;color:#000;font-weight:bold;left:2007.30px;transform-origin:0 0;transform:scaleX(1.0485);">БаДМ ТОВ</div>
<div class="a" style="left:0px;top:721.9px;width:17.3px;height:28.5px;background:#f0f0f0;"></div>
<div class="a" style="left:971px;top:721.9px;width:1188px;height:28.5px;background:#BFDCC0;"></div>
<div class="t" style="top:728.30px;font-size:16.3px;color:#000;font-weight:bold;left:56.66px;transform-origin:100% 0;transform:scaleX(1.1600);">123705</div>
<div class="t" style="top:728.30px;font-size:16.3px;color:#000;font-weight:bold;left:118.80px;transform-origin:0 0;transform:scaleX(1.0557);">Апсорбин пор. орал. саше № 10</div>
<div class="t" style="top:728.30px;font-size:16.3px;color:#000;font-weight:bold;left:659.00px;transform-origin:0 0;transform:scaleX(1.0856);">Фармак</div>
<div class="t" style="top:728.30px;font-size:16.3px;color:#000;font-weight:bold;left:786.00px;transform-origin:0 0;transform:scaleX(1.0993);">ПДВ 2...</div>
<div class="t" style="top:728.30px;font-size:16.3px;color:#000;font-weight:bold;left:913.16px;transform-origin:100% 0;transform:scaleX(1.1600);">594093</div>
<div class="t" style="top:728.30px;font-size:16.3px;color:#000;font-weight:bold;left:975.30px;transform-origin:0 0;transform:scaleX(1.1600);">413.0628</div>
<div class="t" style="top:728.30px;font-size:16.3px;color:#000;font-weight:bold;left:1119.56px;transform-origin:100% 0;transform:scaleX(1.1600);">594093</div>
<div class="t" style="top:728.30px;font-size:16.3px;color:#000;font-weight:bold;left:1181.70px;transform-origin:0 0;transform:scaleX(1.0747);">Апсорбин саше пор.д/орал.сусп. №10 д...</div>
<div class="t" style="top:728.30px;font-size:16.3px;color:#000;font-weight:bold;left:1551.30px;transform-origin:0 0;transform:scaleX(1.0982);">ПАТ"Фармак", Україна</div>
<div class="t" style="top:728.30px;font-size:16.3px;color:#000;font-weight:bold;left:1963.27px;transform-origin:100% 0;transform:scaleX(1.1600);">5716</div>
<div class="t" style="top:728.30px;font-size:16.3px;color:#000;font-weight:bold;left:2007.30px;transform-origin:0 0;transform:scaleX(1.0485);">БаДМ ТОВ</div>
<div class="a" style="left:0px;top:750.4px;width:17.3px;height:28.5px;background:#f0f0f0;"></div>
<div class="a" style="left:971px;top:750.4px;width:1188px;height:28.5px;background:#BFDCC0;"></div>
<div class="t" style="top:756.80px;font-size:16.3px;color:#000;font-weight:bold;left:74.77px;transform-origin:100% 0;transform:scaleX(1.1600);">6556</div>
<div class="t" style="top:756.80px;font-size:16.3px;color:#000;font-weight:bold;left:118.80px;transform-origin:0 0;transform:scaleX(1.0724);">Сорбит пор. 500 г</div>
<div class="t" style="top:756.80px;font-size:16.3px;color:#000;font-weight:bold;left:659.00px;transform-origin:0 0;transform:scaleX(1.0257);">Hugestone E...</div>
<div class="t" style="top:756.80px;font-size:16.3px;color:#000;font-weight:bold;left:786.00px;transform-origin:0 0;transform:scaleX(1.0993);">ПДВ 2...</div>
<div class="t" style="top:756.80px;font-size:16.3px;color:#000;font-weight:bold;left:913.16px;transform-origin:100% 0;transform:scaleX(1.1600);">151691</div>
<div class="t" style="top:756.80px;font-size:16.3px;color:#000;font-weight:bold;left:975.30px;transform-origin:0 0;transform:scaleX(1.1600);">963.0009</div>
<div class="t" style="top:756.80px;font-size:16.3px;color:#000;font-weight:bold;left:1119.56px;transform-origin:100% 0;transform:scaleX(1.1600);">151691</div>
<div class="t" style="top:756.80px;font-size:16.3px;color:#000;font-weight:bold;left:1181.70px;transform-origin:0 0;transform:scaleX(1.1139);">Сорбит 500г в/кр.уп</div>
<div class="t" style="top:756.80px;font-size:16.3px;color:#000;font-weight:bold;left:1551.30px;transform-origin:0 0;transform:scaleX(1.0665);">Барвиста , Украина</div>
<div class="t" style="top:756.80px;font-size:16.3px;color:#000;font-weight:bold;left:1963.27px;transform-origin:100% 0;transform:scaleX(1.1600);">5716</div>
<div class="t" style="top:756.80px;font-size:16.3px;color:#000;font-weight:bold;left:2007.30px;transform-origin:0 0;transform:scaleX(1.0485);">БаДМ ТОВ</div>
<div class="a" style="left:0px;top:778.9px;width:17.3px;height:28.5px;background:#f0f0f0;"></div>
<div class="a" style="left:971px;top:778.9px;width:1188px;height:28.5px;background:#BFDCC0;"></div>
<div class="t" style="top:785.30px;font-size:16.3px;color:#000;font-weight:bold;left:74.77px;transform-origin:100% 0;transform:scaleX(1.1600);">2021</div>
<div class="t" style="top:785.30px;font-size:16.3px;color:#000;font-weight:bold;left:118.80px;transform-origin:0 0;transform:scaleX(1.0724);">Сорбит пор. 250 г</div>
<div class="t" style="top:785.30px;font-size:16.3px;color:#000;font-weight:bold;left:659.00px;transform-origin:0 0;transform:scaleX(1.0257);">Hugestone E...</div>
<div class="t" style="top:785.30px;font-size:16.3px;color:#000;font-weight:bold;left:786.00px;transform-origin:0 0;transform:scaleX(1.0993);">ПДВ 2...</div>
<div class="t" style="top:785.30px;font-size:16.3px;color:#000;font-weight:bold;left:913.16px;transform-origin:100% 0;transform:scaleX(1.1600);">151690</div>
<div class="t" style="top:785.30px;font-size:16.3px;color:#000;font-weight:bold;left:975.30px;transform-origin:0 0;transform:scaleX(1.1600);">963.0008</div>
<div class="t" style="top:785.30px;font-size:16.3px;color:#000;font-weight:bold;left:1119.56px;transform-origin:100% 0;transform:scaleX(1.1600);">151690</div>
<div class="t" style="top:785.30px;font-size:16.3px;color:#000;font-weight:bold;left:1181.70px;transform-origin:0 0;transform:scaleX(1.1139);">Сорбит 250г в/кр.уп</div>
<div class="t" style="top:785.30px;font-size:16.3px;color:#000;font-weight:bold;left:1551.30px;transform-origin:0 0;transform:scaleX(1.0665);">Барвиста , Украина</div>
<div class="t" style="top:785.30px;font-size:16.3px;color:#000;font-weight:bold;left:1963.27px;transform-origin:100% 0;transform:scaleX(1.1600);">5716</div>
<div class="t" style="top:785.30px;font-size:16.3px;color:#000;font-weight:bold;left:2007.30px;transform-origin:0 0;transform:scaleX(1.0485);">БаДМ ТОВ</div>
<div class="a" style="left:0px;top:807.4px;width:17.3px;height:28.5px;background:#f0f0f0;"></div>
<div class="a" style="left:971px;top:807.4px;width:1188px;height:28.5px;background:#BFDCC0;"></div>
<div class="t" style="top:813.80px;font-size:16.3px;color:#000;font-weight:bold;left:56.66px;transform-origin:100% 0;transform:scaleX(1.1600);">106890</div>
<div class="t" style="top:813.80px;font-size:16.3px;color:#000;font-weight:bold;left:118.80px;transform-origin:0 0;transform:scaleX(1.0907);">Алко-сорб 7,5 мг № 4</div>
<div class="t" style="top:813.80px;font-size:16.3px;color:#000;font-weight:bold;left:659.00px;transform-origin:0 0;transform:scaleX(1.0936);">Украина</div>
<div class="t" style="top:813.80px;font-size:16.3px;color:#000;font-weight:bold;left:786.00px;transform-origin:0 0;transform:scaleX(1.0993);">ПДВ 2...</div>
<div class="t" style="top:813.80px;font-size:16.3px;color:#000;font-weight:bold;left:913.16px;transform-origin:100% 0;transform:scaleX(1.1600);">593415</div>
<div class="t" style="top:813.80px;font-size:16.3px;color:#000;font-weight:bold;left:975.30px;transform-origin:0 0;transform:scaleX(1.1600);">1291013</div>
<div class="t" style="top:813.80px;font-size:16.3px;color:#000;font-weight:bold;left:1119.56px;transform-origin:100% 0;transform:scaleX(1.1600);">593415</div>
<div class="t" style="top:813.80px;font-size:16.3px;color:#000;font-weight:bold;left:1181.70px;transform-origin:0 0;transform:scaleX(1.1009);">Алко-сорб пор.пак.9,0 г N4 диет.доб.</div>
<div class="t" style="top:813.80px;font-size:16.3px;color:#000;font-weight:bold;left:1551.30px;transform-origin:0 0;transform:scaleX(1.0417);">ТзОВ"Ор?с?л-фарм", У...</div>
<div class="t" style="top:813.80px;font-size:16.3px;color:#000;font-weight:bold;left:1963.27px;transform-origin:100% 0;transform:scaleX(1.1600);">5716</div>
<div class="t" style="top:813.80px;font-size:16.3px;color:#000;font-weight:bold;left:2007.30px;transform-origin:0 0;transform:scaleX(1.0485);">БаДМ ТОВ</div>
<div class="a" style="left:0px;top:835.9px;width:17.3px;height:28.5px;background:#f0f0f0;"></div>
<div class="a" style="left:971px;top:835.9px;width:1188px;height:28.5px;background:#BFDCC0;"></div>
<div class="t" style="top:842.30px;font-size:16.3px;color:#000;font-weight:bold;left:57.56px;transform-origin:100% 0;transform:scaleX(1.1600);">110104</div>
<div class="t" style="top:842.30px;font-size:16.3px;color:#000;font-weight:bold;left:118.80px;transform-origin:0 0;transform:scaleX(1.1188);">Уголь акт. сорбофит-актив таб. №10</div>
<div class="t" style="top:842.30px;font-size:16.3px;color:#000;font-weight:bold;left:659.00px;transform-origin:0 0;transform:scaleX(1.0836);">Фитобад</div>
<div class="t" style="top:842.30px;font-size:16.3px;color:#000;font-weight:bold;left:786.00px;transform-origin:0 0;transform:scaleX(1.0993);">ПДВ 2...</div>
<div class="t" style="top:842.30px;font-size:16.3px;color:#000;font-weight:bold;left:913.16px;transform-origin:100% 0;transform:scaleX(1.1600);">441732</div>
<div class="t" style="top:842.30px;font-size:16.3px;color:#000;font-weight:bold;left:975.30px;transform-origin:0 0;transform:scaleX(1.1600);">5176004</div>
<div class="t" style="top:842.30px;font-size:16.3px;color:#000;font-weight:bold;left:1119.56px;transform-origin:100% 0;transform:scaleX(1.1600);">441732</div>
<div class="t" style="top:842.30px;font-size:16.3px;color:#000;font-weight:bold;left:1181.70px;transform-origin:0 0;transform:scaleX(1.0920);">Сорбофит+сорбент табл.N10 диет.доб....</div>
<div class="t" style="top:842.30px;font-size:16.3px;color:#000;font-weight:bold;left:1551.30px;transform-origin:0 0;transform:scaleX(1.1072);">ПП"Фітобад", Україна</div>
<div class="t" style="top:842.30px;font-size:16.3px;color:#000;font-weight:bold;left:1963.27px;transform-origin:100% 0;transform:scaleX(1.1600);">5716</div>
<div class="t" style="top:842.30px;font-size:16.3px;color:#000;font-weight:bold;left:2007.30px;transform-origin:0 0;transform:scaleX(1.0485);">БаДМ ТОВ</div>
<div class="a" style="left:0px;top:864.4px;width:17.3px;height:28.5px;background:#f0f0f0;"></div>
<div class="a" style="left:971px;top:864.4px;width:1188px;height:28.5px;background:#BFDCC0;"></div>
<div class="t" style="top:870.80px;font-size:16.3px;color:#000;font-weight:bold;left:65.72px;transform-origin:100% 0;transform:scaleX(1.1600);">19545</div>
<div class="t" style="top:870.80px;font-size:16.3px;color:#000;font-weight:bold;left:118.80px;transform-origin:0 0;transform:scaleX(1.0711);">Хетасорб р-р инф. 6% фл. 500 мл</div>
<div class="t" style="top:870.80px;font-size:16.3px;color:#000;font-weight:bold;left:659.00px;transform-origin:0 0;transform:scaleX(1.1014);">Hemofarm</div>
<div class="t" style="top:870.80px;font-size:16.3px;color:#000;font-weight:bold;left:786.00px;transform-origin:0 0;transform:scaleX(1.0900);">ПДВ 7%</div>
<div class="t" style="top:870.80px;font-size:16.3px;color:#000;font-weight:bold;left:914.06px;transform-origin:100% 0;transform:scaleX(1.1600);">110072</div>
<div class="t" style="top:870.80px;font-size:16.3px;color:#000;font-weight:bold;left:975.30px;transform-origin:0 0;transform:scaleX(1.1600);">438.0065</div>
<div class="t" style="top:870.80px;font-size:16.3px;color:#000;font-weight:bold;left:1120.46px;transform-origin:100% 0;transform:scaleX(1.1600);">110072</div>
<div class="t" style="top:870.80px;font-size:16.3px;color:#000;font-weight:bold;left:1181.70px;transform-origin:0 0;transform:scaleX(1.0916);">Хетасорб 6% р-р д/инф.500мл N1 фл.</div>
<div class="t" style="top:870.80px;font-size:16.3px;color:#000;font-weight:bold;left:1551.30px;transform-origin:0 0;transform:scaleX(1.0339);">Хемофарм АД, Серб?я</div>
<div class="t" style="top:870.80px;font-size:16.3px;color:#000;font-weight:bold;left:1963.27px;transform-origin:100% 0;transform:scaleX(1.1600);">5716</div>
<div class="t" style="top:870.80px;font-size:16.3px;color:#000;font-weight:bold;left:2007.30px;transform-origin:0 0;transform:scaleX(1.0485);">БаДМ ТОВ</div>
<div class="a" style="left:0px;top:892.9px;width:17.3px;height:28.5px;background:#f0f0f0;"></div>
<div class="a" style="left:971px;top:892.9px;width:1188px;height:28.5px;background:#BFDCC0;"></div>
<div class="t" style="top:899.30px;font-size:16.3px;color:#000;font-weight:bold;left:74.77px;transform-origin:100% 0;transform:scaleX(1.1600);">6488</div>
<div class="t" style="top:899.30px;font-size:16.3px;color:#000;font-weight:bold;left:118.80px;transform-origin:0 0;transform:scaleX(1.0893);">Нитросорбид табл. 0,01 г блистер №40</div>
<div class="t" style="top:899.30px;font-size:16.3px;color:#000;font-weight:bold;left:659.00px;transform-origin:0 0;transform:scaleX(1.0329);">Монфарм</div>
<div class="t" style="top:899.30px;font-size:16.3px;color:#000;font-weight:bold;left:786.00px;transform-origin:0 0;transform:scaleX(1.0900);">ПДВ 7%</div>
<div class="t" style="top:899.30px;font-size:16.3px;color:#000;font-weight:bold;left:913.16px;transform-origin:100% 0;transform:scaleX(1.1600);">104884</div>
<div class="t" style="top:899.30px;font-size:16.3px;color:#000;font-weight:bold;left:975.30px;transform-origin:0 0;transform:scaleX(1.1600);">276.0057</div>
<div class="t" style="top:899.30px;font-size:16.3px;color:#000;font-weight:bold;left:1119.56px;transform-origin:100% 0;transform:scaleX(1.1600);">104884</div>
<div class="t" style="top:899.30px;font-size:16.3px;color:#000;font-weight:bold;left:1181.70px;transform-origin:0 0;transform:scaleX(1.0993);">Нитросорбид табл. 10мг N40 (20x2)</div>
<div class="t" style="top:899.30px;font-size:16.3px;color:#000;font-weight:bold;left:1551.30px;transform-origin:0 0;transform:scaleX(1.0724);">ПАТ Монфарм, Україна</div>
<div class="t" style="top:899.30px;font-size:16.3px;color:#000;font-weight:bold;left:1963.27px;transform-origin:100% 0;transform:scaleX(1.1600);">5716</div>
<div class="t" style="top:899.30px;font-size:16.3px;color:#000;font-weight:bold;left:2007.30px;transform-origin:0 0;transform:scaleX(1.0485);">БаДМ ТОВ</div>
<div class="a" style="left:0px;top:921.4px;width:17.3px;height:28.5px;background:#f0f0f0;"></div>
<div class="a" style="left:971px;top:921.4px;width:1188px;height:28.5px;background:#BFDCC0;"></div>
<div class="t" style="top:927.80px;font-size:16.3px;color:#000;font-weight:bold;left:74.77px;transform-origin:100% 0;transform:scaleX(1.1600);">8249</div>
<div class="t" style="top:927.80px;font-size:16.3px;color:#000;font-weight:bold;left:118.80px;transform-origin:0 0;transform:scaleX(1.0822);">Фитосорб табл. №10</div>
<div class="t" style="top:927.80px;font-size:16.3px;color:#000;font-weight:bold;left:659.00px;transform-origin:0 0;transform:scaleX(1.0609);">Астрафарм</div>
<div class="t" style="top:927.80px;font-size:16.3px;color:#000;font-weight:bold;left:786.00px;transform-origin:0 0;transform:scaleX(1.0993);">ПДВ 2...</div>
<div class="t" style="top:927.80px;font-size:16.3px;color:#000;font-weight:bold;left:913.16px;transform-origin:100% 0;transform:scaleX(1.1600);">102060</div>
<div class="t" style="top:927.80px;font-size:16.3px;color:#000;font-weight:bold;left:975.30px;transform-origin:0 0;transform:scaleX(1.1600);">860018</div>
<div class="t" style="top:927.80px;font-size:16.3px;color:#000;font-weight:bold;left:1119.56px;transform-origin:100% 0;transform:scaleX(1.1600);">102060</div>
<div class="t" style="top:927.80px;font-size:16.3px;color:#000;font-weight:bold;left:1181.70px;transform-origin:0 0;transform:scaleX(1.0917);">Фитосорб-Актив табл.0.28 N10 (уголь а...</div>
<div class="t" style="top:927.80px;font-size:16.3px;color:#000;font-weight:bold;left:1551.30px;transform-origin:0 0;transform:scaleX(1.0640);">ТОВ"Астрафарм" , Укр...</div>
<div class="t" style="top:927.80px;font-size:16.3px;color:#000;font-weight:bold;left:1963.27px;transform-origin:100% 0;transform:scaleX(1.1600);">5716</div>
<div class="t" style="top:927.80px;font-size:16.3px;color:#000;font-weight:bold;left:2007.30px;transform-origin:0 0;transform:scaleX(1.0485);">БаДМ ТОВ</div>
<div class="a" style="left:0px;top:350px;width:2159px;height:2px;background:#ababab;"></div>
<div class="a" style="left:0px;top:379px;width:2159px;height:2px;background:#ababab;"></div>
<div class="a" style="left:0px;top:407px;width:2159px;height:2px;background:#ababab;"></div>
<div class="a" style="left:0px;top:436px;width:2159px;height:2px;background:#ababab;"></div>
<div class="a" style="left:0px;top:464px;width:2159px;height:2px;background:#ababab;"></div>
<div class="a" style="left:0px;top:493px;width:2159px;height:2px;background:#ababab;"></div>
<div class="a" style="left:0px;top:521px;width:2159px;height:2px;background:#ababab;"></div>
<div class="a" style="left:0px;top:550px;width:2159px;height:2px;background:#ababab;"></div>
<div class="a" style="left:0px;top:578px;width:2159px;height:2px;background:#ababab;"></div>
<div class="a" style="left:0px;top:607px;width:2159px;height:2px;background:#ababab;"></div>
<div class="a" style="left:0px;top:635px;width:2159px;height:2px;background:#ababab;"></div>
<div class="a" style="left:0px;top:664px;width:2159px;height:2px;background:#ababab;"></div>
<div class="a" style="left:0px;top:692px;width:2159px;height:2px;background:#ababab;"></div>
<div class="a" style="left:0px;top:721px;width:2159px;height:2px;background:#ababab;"></div>
<div class="a" style="left:0px;top:749px;width:2159px;height:2px;background:#ababab;"></div>
<div class="a" style="left:0px;top:778px;width:2159px;height:2px;background:#ababab;"></div>
<div class="a" style="left:0px;top:806px;width:2159px;height:2px;background:#ababab;"></div>
<div class="a" style="left:0px;top:835px;width:2159px;height:2px;background:#ababab;"></div>
<div class="a" style="left:0px;top:863px;width:2159px;height:2px;background:#ababab;"></div>
<div class="a" style="left:0px;top:892px;width:2159px;height:2px;background:#ababab;"></div>
<div class="a" style="left:0px;top:920px;width:2159px;height:2px;background:#ababab;"></div>
<div class="a" style="left:0px;top:949px;width:2159px;height:2px;background:#ababab;"></div>
<div class="a" style="left:16px;top:323px;width:2px;height:627px;background:#ababab;"></div>
<div class="a" style="left:114px;top:323px;width:2px;height:627px;background:#ababab;"></div>
<div class="a" style="left:654px;top:323px;width:2px;height:627px;background:#ababab;"></div>
<div class="a" style="left:781px;top:323px;width:2px;height:627px;background:#ababab;"></div>
<div class="a" style="left:860px;top:323px;width:2px;height:627px;background:#ababab;"></div>
<div class="a" style="left:970px;top:323px;width:2px;height:627px;background:#ababab;"></div>
<div class="a" style="left:1067px;top:323px;width:2px;height:627px;background:#ababab;"></div>
<div class="a" style="left:1177px;top:323px;width:2px;height:627px;background:#ababab;"></div>
<div class="a" style="left:1546px;top:323px;width:2px;height:627px;background:#ababab;"></div>
<div class="a" style="left:1767px;top:323px;width:2px;height:627px;background:#ababab;"></div>
<div class="a" style="left:1866px;top:323px;width:2px;height:627px;background:#ababab;"></div>
<div class="a" style="left:2002px;top:323px;width:2px;height:627px;background:#ababab;"></div>
<div class="a" style="left:17.3px;top:323.2px;width:2141.7px;height:1.5px;background:transparent;background-image:repeating-linear-gradient(90deg,#c9a088 0 1.5px,transparent 1.5px 3px);"></div>
<div class="a" style="left:17.3px;top:349.09999999999997px;width:2141.7px;height:1.5px;background:transparent;background-image:repeating-linear-gradient(90deg,#c9a088 0 1.5px,transparent 1.5px 3px);"></div>
<div class="a" style="left:17.3px;top:322.9px;width:1.5px;height:28.5px;background:transparent;background-image:repeating-linear-gradient(180deg,#c9a088 0 1.5px,transparent 1.5px 3px);"></div>
<svg style="left:5.5px;top:330.5px" width="9" height="14" viewBox="0 0 9 14"><path d="M1 0.8 L8.2 7 L1 13.2" fill="none" stroke="#111" stroke-width="1.9"/><path d="M1.2 4.4 L4.5 7 L1.2 9.6 Z" fill="#111"/></svg>
<div class="a" style="left:0px;top:1244.5px;width:2159px;height:3.5px;background:#9c9c9c;"></div>
<div class="a" style="left:0px;top:1248px;width:2159px;height:32px;background:#F0F0F0;"></div>
<div class="a" style="left:16.8px;top:1248px;width:1.3px;height:32px;background:#a8a8a8;"></div>
<div class="a" style="left:117.4px;top:1250.3px;width:536px;height:27.2px;background:#E4E7E8;box-sizing:border-box;border:1px solid #dadddd;"></div>
<div class="t" style="top:1256.60px;font-size:16.3px;color:#111;font-weight:bold;left:121.60px;transform-origin:0 0;transform:scaleX(1.0609);">Запис 1 із 22</div>
<div class="a" style="left:0px;top:1279.6px;width:2159px;height:1.5px;background:#b4b4b4;"></div>
<div class="a" style="left:0px;top:1281px;width:2159px;height:28px;background:#F0F0F0;"></div>
<div class="a" style="left:25.7px;top:1283px;width:1429.6px;height:21.5px;background:#CDCDCD;"></div>
<svg style="left:7px;top:1287px" width="10" height="12" viewBox="0 0 10 12"><path d="M8 1.2 L2.6 6 L8 10.8" fill="none" stroke="#555" stroke-width="2.9"/></svg>
<svg style="left:2143px;top:1287px" width="10" height="12" viewBox="0 0 10 12"><path d="M2 1.2 L7.4 6 L2 10.8" fill="none" stroke="#555" stroke-width="2.9"/></svg>
<div class="a" style="left:0px;top:1309px;width:2159px;height:38.5px;background:#F0F0F0;"></div>
<div class="a" style="left:5px;top:1309.5px;width:186.7px;height:34px;background:#F0F0F0;box-sizing:border-box;border:1.7px solid #222;"></div>
<div class="t" style="top:1317.73px;font-size:16.5px;color:#111;left:10.00px;transform-origin:0 0;transform:scaleX(0.9681);">Головна</div>
<div class="a" style="left:195px;top:1309.5px;width:187px;height:34px;background:#FFD1A3;box-sizing:border-box;border:1.8px solid #2f8be2;"></div>
<div class="t" style="top:1317.73px;font-size:16.5px;color:#111;left:198.30px;transform-origin:0 0;transform:scaleX(1.0029);">Прив'язки товарів</div>
<div class="a" style="left:0px;top:1347px;width:2159px;height:1.5px;background:#d8d8d8;"></div>
<div class="a" style="left:0px;top:1348.5px;width:2159px;height:28.5px;background:#F0F0F0;"></div>
<div class="a" style="left:296.7px;top:1349px;width:1.2px;height:28px;background:#d4d4d4;"></div>
<div class="a" style="left:602.1px;top:1349px;width:1.2px;height:28px;background:#d4d4d4;"></div>
<div class="a" style="left:661.1px;top:1349px;width:1.2px;height:28px;background:#d4d4d4;"></div>
<div class="a" style="left:1117.7px;top:1349px;width:1.2px;height:28px;background:#d4d4d4;"></div>
<svg style="left:4px;top:1351px" width="20" height="24" viewBox="0 0 20 24"><defs><linearGradient id="db" x1="0" x2="1"><stop offset="0" stop-color="#8f8fc8"/><stop offset="0.35" stop-color="#c9c6ee"/><stop offset="1" stop-color="#7770b8"/></linearGradient></defs><path d="M1.5 3 Q10 0 18.5 3 V20 Q10 23.5 1.5 20 Z" fill="url(#db)"/><path d="M2 7.5 H18 M2 11 H18 M2 14.5 H18" stroke="#2a8de8" stroke-width="2"/><path d="M2 9.2 H18 M2 12.7 H18" stroke="#c5d8f5" stroke-width="0.9"/></svg>
<div class="t" style="top:1355.03px;font-size:16.5px;color:#111;left:30.70px;transform-origin:0 0;transform:scaleX(0.9936);">База даних: TASA3@TITAN</div>
<svg style="left:303px;top:1352px" width="18" height="22" viewBox="0 0 18 22"><path d="M1.5 21.5 Q1.5 13.5 9 13.5 Q16.5 13.5 16.5 21.5 Z" fill="#9d97dc"/><path d="M6 14 L9 19 L12 14 Z" fill="#d9d6f5"/><circle cx="9.2" cy="8.5" r="4.6" fill="#c3c0ee"/><ellipse cx="9.2" cy="10.8" rx="2.6" ry="1.8" fill="#f0a55a"/><path d="M4.2 7.5 Q4.5 2 10 2.2" fill="none" stroke="#e3342a" stroke-width="3" stroke-linecap="round"/></svg>
<div class="t" style="top:1355.03px;font-size:16.5px;color:#111;left:329.00px;transform-origin:0 0;transform:scaleX(0.9711);">Користувач: GIFT</div>
<svg style="left:606px;top:1351px" width="21" height="24" viewBox="0 0 21 24"><path d="M2 9 L8 4 L16 5 L20 10 V20 L14 22 H4 L2 19 Z" fill="#8d8fd6"/><path d="M8 4 L16 5 L20 10 L10 9 Z" fill="#b3b6ec"/><path d="M15 1.5 L16.5 5" stroke="#555" stroke-width="1"/><path d="M4.5 15 L2.8 21.5 M12 15 L10.3 21.5" stroke="#4a3a10" stroke-width="3.2"/><path d="M4.5 15 L2.8 21.5 M12 15 L10.3 21.5" stroke="#f0c838" stroke-width="1.8"/></svg>
<div class="t" style="top:1355.03px;font-size:16.5px;color:#111;left:635.00px;transform-origin:0 0;transform:scaleX(0.9034);">3</div>
<div class="t" style="top:1355.03px;font-size:16.5px;color:#111;left:666.00px;transform-origin:0 0;transform:scaleX(1.0027);">Кассовый аппарат не подключен</div>
<div class="t" style="top:1355.03px;font-size:16.5px;color:#111;left:1123.30px;transform-origin:0 0;transform:scaleX(0.9805);">Зона: Склад [1]</div>
<svg style="left:0;top:0" width="2159" height="1377" viewBox="0 0 2159 1377"><path d="M174.73 190.80 L190.89 197.12 L190.61 199.22 L186.43 199.16 L215.91 233.43 L430.61 482.33 L429.93 482.92 L211.55 237.25 L181.47 203.51 L180.98 207.66 L178.85 207.66 Z" fill="#ff0000" stroke="#ff0000" stroke-width="1" stroke-linejoin="round"/></svg>
<div class="a" style="left:0px;top:1375px;width:2159px;height:1px;background:#ffffff;"></div>
<div class="a" style="left:0px;top:1376px;width:2159px;height:1px;background:#111111;"></div>
</body></html>
